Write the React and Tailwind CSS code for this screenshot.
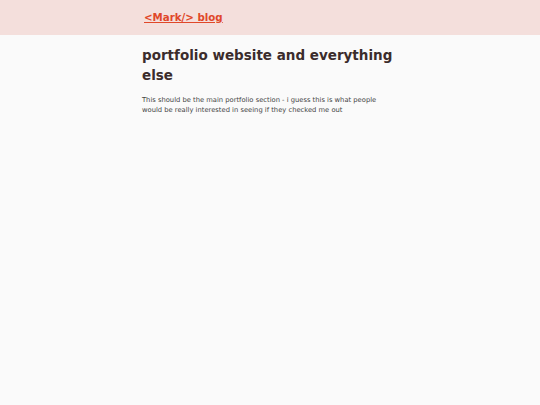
const App = () => {
  return (
    <div className="min-h-screen bg-[#fafafa] font-['DejaVu_Sans',sans-serif]">
      <header className="h-[35px] bg-[#f4dfdc]">
        <div className="mx-auto flex h-full max-w-[256px] items-center">
          <a href="#" className="ml-[2px] text-[10.25px] font-bold text-[#e0482a] underline">
            &lt;Mark/&gt; blog
          </a>
        </div>
      </header>

      <main className="mx-auto max-w-[256px] pt-[10px]">
        <h1 className="text-[13.5px] font-bold leading-[20px] text-[#3b2c2c]">
          portfolio website and everything else
        </h1>
        <p className="mt-[10px] text-[6.75px] leading-[10px] text-[#444]">
          This should be the main portfolio section - i guess this is what people would be really
          interested in seeing if they checked me out
        </p>
      </main>
    </div>
  );
};

export default App;
